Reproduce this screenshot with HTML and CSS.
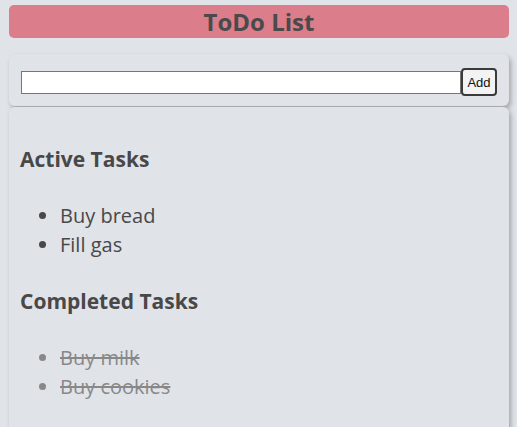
FILE: index.html
```html
<!DOCTYPE html>
<html lang="en">
<head>
<meta charset="utf-8">
<title>ToDo List</title>
<link rel="stylesheet" href="styles.css">
</head>
<body>
  <header class="title-bar">
    <h1 class="title">ToDo List</h1>
  </header>
  <div class="card add-card">
    <input class="task-input" type="text">
    <button class="add-btn">Add</button>
  </div>
  <div class="card list-card">
    <section class="section section-active">
      <h3 class="section-title">Active Tasks</h3>
      <ul class="task-list">
        <li>Buy bread</li>
        <li>Fill gas</li>
      </ul>
    </section>
    <section class="section section-done">
      <h3 class="section-title">Completed Tasks</h3>
      <ul class="task-list done">
        <li>Buy milk</li>
        <li>Buy cookies</li>
      </ul>
    </section>
  </div>
</body>
</html>
```
FILE: styles.css
```css
html, body {
  margin: 0;
  background: #e0e3e8;
}
body {
  padding: 5px 8px 0 9px;
  font-family: "Open Sans", "Noto Sans", sans-serif;
  color: #484848;
  overflow: hidden;
  height: 427px;
  box-sizing: border-box;
}
.title-bar {
  background: #db7d8b;
  border-radius: 5px;
  height: 33px;
  display: flex;
  align-items: center;
  justify-content: center;
}
.title {
  margin: 0;
  font-size: 24px;
  font-weight: 700;
  line-height: 33px;
  color: #4a4a4a;
}
.card {
  background: #e0e3e8;
  border-radius: 6px;
  box-shadow: 2px 3px 5px rgba(0, 0, 0, 0.28);
}
.add-card {
  margin-top: 16px;
  height: 52px;
  box-sizing: border-box;
  padding: 14px 12px 10px 12px;
  display: flex;
  align-items: center;
}
.task-input {
  flex: 1;
  height: 23px;
  box-sizing: border-box;
  margin: 0;
  border: 1px solid #767676;
  background: #fff;
  padding: 0 2px;
}
.add-btn {
  width: 36px;
  height: 28px;
  box-sizing: border-box;
  margin: 0;
  padding: 0;
  border: 2px solid #3a3a3a;
  border-radius: 4px;
  background: #f3f3f3;
  font-family: "Liberation Sans", Arial, sans-serif;
  font-size: 13px;
  color: #111;
}
.list-card {
  margin-top: 1px;
  padding: 38px 11px 30px 11px;
  border-radius: 6px 6px 0 0;
}
.section-done {
  margin-top: 28px;
}
.section-title {
  margin: 0 0 27px 0;
  font-size: 21px;
  font-weight: 700;
  line-height: 29px;
}
.task-list {
  margin: 0;
  padding-left: 40px;
  font-size: 20px;
  line-height: 29px;
}
.task-list.done {
  color: #888;
  text-decoration: line-through;
}
```
